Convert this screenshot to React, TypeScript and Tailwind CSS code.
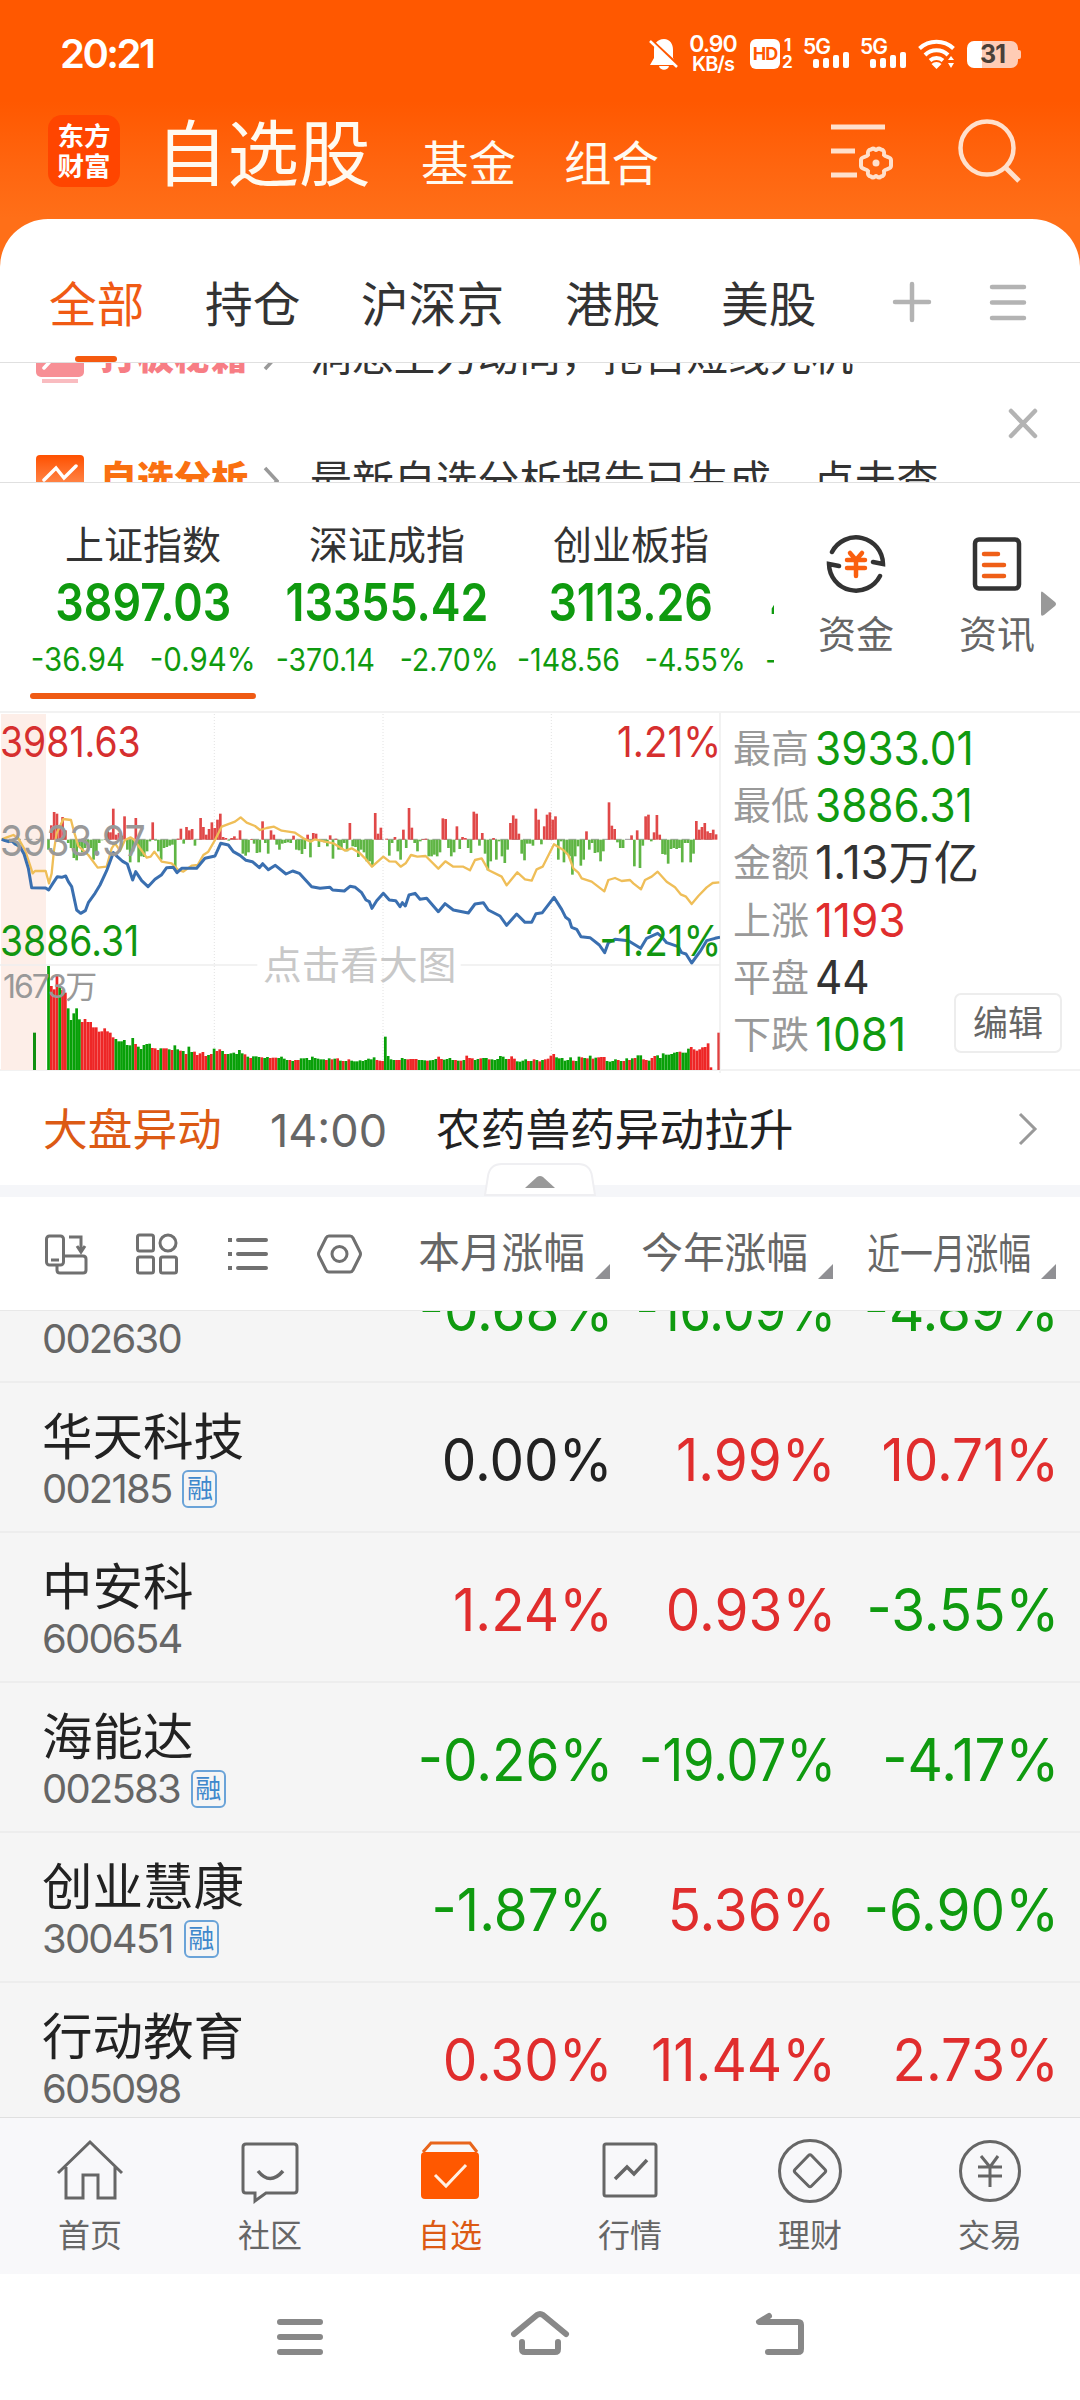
import type { ReactNode } from "react";

const UP = "text-[#e02d2d]";
const DOWN = "text-[#0f9a0f]";
const FLAT = "text-[#222222]";

function tone(value: string) {
  if (value.startsWith("-")) return DOWN;
  return value === "0.00%" ? FLAT : UP;
}

// One entry per minute, in thirds of a pixel: above zero is drawn red, below zero green.
const MOMENTUM = [
  -30, 43, 83, 78, 40, 68, 28, -10, -25, -55, -62, -20, -38, -25, -12, -25, -60, -38, -10, -2, 0, 25, 22, 93, 15, 20, 12,
  70, -30, -68, -35, 65, -68, -50, -52, -35, -5, 52, -3, -35, -60, -25, -22, -18, -15, -90, 3, 33, -12, 38, 28, 32, -18,
  0, 65, 38, 15, 32, 52, 35, 60, 78, 8, 5, -3, 5, 10, 3, 28, -42, -48, -38, 2, -12, -40, -38, 55, -10, -42, 28, 15, -15,
  -30, -12, -10, -8, -10, 12, -30, -32, -43, -28, 15, -53, 20, 18, -22, -5, -8, -20, 13, -57, 3, -30, -30, -10, -35, 50,
  -20, -22, -52, -30, -38, -65, -65, -80, 80, 18, 36, 0, 3, -48, -10, 8, -35, -60, 30, -25, 95, 36, -10, -35, -5, 2, 3,
  -50, -50, -45, -50, -38, 64, 62, -25, -50, -38, 40, -28, 8, 5, -25, -40, 84, 78, -18, 20, -42, -92, -65, 5, -60, -5,
  -50, -70, -30, 50, 73, 63, 18, -42, -62, -12, -12, -18, 93, 60, -14, 40, 75, 82, 60, 70, -60, -5, -68, -40, -50, -105,
  -50, -20, -78, -60, 25, -30, -10, -40, -38, -65, -35, 0, 112, 42, 32, -8, -25, -25, 0, 0, 13, -80, 28, -85, -18, 70,
  75, -5, 22, 74, 15, -43, -45, -72, -28, -25, -28, -25, -68, -10, -10, -68, -42, 56, 30, 38, 50, 25, 20, 30, 16,
];

// Same scale; r / g is the bar's colour.
const VOLUME = `g312 r252 r242 r285 g248 r240 r232 g185 g150 g170 g185 g152 r144 r153 r144 r144 r128 r128 r115 r116 r125
r116 r112 r98 g93 g86 g86 g90 g75 g74 g96 r78 g70 g63 g75 g78 g79 r66 r65 r60 g65 r65 r65 g62 r60 g74 g62 r58 g57 r48
g70 g54 r55 r45 r50 r54 r42 g45 r48 g64 r57 r62 g57 r48 g48 g50 g52 g48 g60 g50 r47 g40 r36 g41 g41 g39 r38 g36 g39
r36 r37 r37 g36 g40 g34 g30 r30 g27 r30 r30 g35 g35 g36 g30 g40 g36 g34 g32 g32 r30 g35 r32 g34 r35 g28 r27 g27 r32
g28 g26 g26 g29 g27 g30 g34 g32 g38 r30 r28 r27 g100 g42 g32 g30 r30 r30 g36 g33 r32 r33 r33 r33 g30 g30
g29 r28 g29 g30 g33 r40 r33 g31 g33 g36 g30 r30 g28 r28 g30 r43 r36 r35 g30 g33 r35 g36 g36 r32 g32
g30 g33 g42 g40 g33 r33 r41 r34 g26 g25 g28 g32 r27 g27 r32 g30 r26 g30 r32 r34 r43 r48 g38 g35 g36 g28 g30 g38
r28 g27 g40 r38 g36 r35 g43 r34 g37 r38 r39 r39 g27 g25 g27 g32 r30 g27 r27 g35 r30 g35 r36 g44 g44
r32 r30 g28 r36 r42 g44 g36 g50 g46 g46 g48 g52 g54 r55 g52 g52 g64 r69 r62 r58 r62 r68 r69 r80 r8`
  .split(/\s+/)
  .map((bar) => ({ up: bar[0] === "r", height: Number(bar.slice(1)) }));

const PRICE_LINE =
  "5,418 15,422 25,425 35,422 45,432 60,440 72,462 85,505 95,563 137,564 146,570 160,548 172,530 185,532 197,528 205,545 215,560 230,630 242,640 256,632 265,608 285,580 300,555 320,512 340,458 352,470 368,484 382,492 398,540 407,515 425,542 444,560 465,538 485,524 500,503 520,502 531,518 545,505 590,505 615,475 645,468 662,430 685,435 700,455 720,466 738,481 757,485 778,503 788,491 805,509 826,496 858,522 878,513 898,520 935,560 960,565 990,562 998,570 1033,573 1050,559 1066,562 1085,578 1098,600 1108,605 1116,625 1130,602 1150,580 1168,600 1187,602 1200,620 1207,608 1216,618 1227,585 1245,580 1260,598 1280,595 1315,635 1335,611 1360,630 1405,639 1425,612 1450,608 1465,630 1500,648 1520,676 1550,642 1575,667 1595,667 1608,641 1627,638 1662,592 1685,628 1697,652 1708,660 1715,682 1730,688 1743,710 1770,713 1798,735 1814,758 1825,728 1845,718 1885,722 1922,745 1940,715 1973,700 1985,710 2000,728 2035,740 2045,758 2058,762 2075,789 2100,755 2120,722 2145,715 2160,712";

const AVERAGE_LINE =
  "5,418 20,412 40,405 55,415 75,450 90,495 98,520 105,513 137,513 147,550 155,520 162,450 170,400 190,357 213,360 222,395 235,438 265,465 293,503 320,500 335,445 345,430 360,452 375,420 392,412 403,420 440,473 452,470 463,455 485,485 515,490 535,510 550,515 575,497 593,495 610,465 625,455 645,420 665,380 705,365 722,352 740,368 765,378 780,390 800,384 822,380 845,392 885,398 910,415 932,425 945,418 975,425 1000,430 1036,452 1055,445 1080,460 1095,475 1116,500 1150,470 1168,484 1187,485 1202,500 1217,490 1233,465 1252,470 1277,468 1315,506 1336,484 1360,500 1390,500 1410,511 1425,480 1445,475 1465,510 1505,530 1520,556 1552,517 1575,538 1595,542 1610,508 1628,500 1662,433 1690,450 1705,465 1720,505 1735,518 1745,535 1775,545 1813,574 1825,540 1845,534 1865,543 1890,540 1900,550 1923,568 1935,540 1955,530 1973,515 2000,545 2025,562 2042,583 2058,590 2075,612 2095,588 2120,562 2138,549 2158,547";

function Signal() {
  return (
    <div className="flex h-[30px] w-[46px] flex-col">
      <span className="text-[21px] leading-[15px] font-semibold tracking-[-1px]">5G</span>
      <div className="-mt-[2px] flex items-end gap-[4px] pl-[10px]">
        <i className="h-[9px] w-[6px] rounded-[2px] bg-white" />
        <i className="h-[10px] w-[6px] rounded-[2px] bg-white" />
        <i className="h-[13px] w-[6px] rounded-[2px] bg-white" />
        <i className="h-[16px] w-[6px] rounded-[2px] bg-white" />
      </div>
    </div>
  );
}

function StatusBar() {
  return (
    <div className="flex h-[108px] items-center pl-[60px] text-white">
      <span className="w-[589px] text-[40px] font-semibold tracking-[-2.500px]">20:21</span>
      <svg width="30" height="32" viewBox="0 0 30 32">
        <path d="M15 1c-7 0-10 5-10 11v8l-4 7h27l-4-7v-8c0-6-3-11-9-11zM10 28h10c-1 5-9 5-10 0z" fill="#fff" />
        <path d="M1 1l30 28" stroke="#ff5800" strokeWidth="3" />
        <path d="M1 3l27 26" stroke="#fff" strokeWidth="2.500" />
      </svg>
      <div className="ml-[10px] flex w-[48px] flex-col items-center">
        <span className="text-[23px] leading-[19px] font-semibold tracking-[-1px]">0.90</span>
        <span className="text-[20px] leading-[20px] font-semibold tracking-[-1px]">KB/s</span>
      </div>
      <div className="ml-[13px] flex h-[30px] w-[30px] items-center justify-center rounded-[6px] bg-white text-[18px] font-bold tracking-[-1px] text-[#ff5800]">
        HD
      </div>
      <div className="ml-[2px] flex w-[21px] flex-col text-[17px] leading-[17px] font-bold">
        <span className="pl-[2px]">1</span>
        <span>2</span>
      </div>
      <Signal />
      <span className="w-[11px]" />
      <Signal />
      <svg className="ml-[12px]" width="38" height="32" viewBox="0 0 38 32" fill="none" stroke="#fff" strokeWidth="4">
        <path d="M1.500 10.500a25 25 0 0 1 34 0M7 17a16.500 16.500 0 0 1 23 0M12 22.500a10 10 0 0 1 13 0" />
        <path d="M13.500 26a7 7 0 0 1 10 0l-5 5z" fill="#fff" stroke="none" />
        <path d="M30 22l3-4 3 4zM30 25h6l-3 5z" fill="#fff" stroke="none" />
      </svg>
      <div className="ml-[11px] flex h-[27px] w-[51px] items-center justify-center rounded-[7px] bg-linear-to-r from-white from-30% to-[#ffccb5] to-30% text-[25px] font-bold tracking-[-1px] text-[#4a4038]">
        31
      </div>
      <i className="h-[9px] w-[3px] rounded-r-[2px] bg-[#ffccb5]" />
    </div>
  );
}

function Header() {
  return (
    <div className="flex h-[111px] text-[#fffaf0]">
      <div className="mt-[7px] ml-[48px] flex size-[72px] flex-col items-center justify-center gap-[3px] rounded-[14px] bg-[#ff4500] text-[26.500px] font-bold text-white">
        <span>东方</span>
        <span>财富</span>
      </div>
      <span className="mt-[11px] ml-[36px] w-[265px] text-[71.500px]">自选股</span>
      <span className="mt-[32px] w-[143px] text-[47.500px]">基金</span>
      <span className="mt-[32px] w-[266px] text-[47.500px]">组合</span>
      <svg
        className="mt-[12px]"
        width="64"
        height="64"
        viewBox="0 0 64 64"
        fill="none"
        stroke="#ffe0cc"
        strokeWidth="5"
      >
        <path d="M1 7h54M1 31h24M1 55h26" />
        <path
          d="M41 29.500c2.500-2.500 4 .5 5 .5s2.500-3 5-.5c3 .5 3.500 2 3 5.500 1.500 2.500 7 1.500 7 5v6c0 3.500-5.500 2.500-7 5 .5 3.500 0 5-3 5.500-2.500 2.500-4-.5-5-.5s-2.500 3-5 .5c-3-.5-3.500-2-3-5.500-1.500-2.500-7-1.500-7-5v-6c0-3.500 5.500-2.500 7-5-.5-3.500 0-5 3-5.500z"
          strokeWidth="4"
        />
        <circle cx="46" cy="43" r="3.500" fill="#ffe0cc" stroke="none" />
      </svg>
      <svg className="mt-[10px] ml-[63px]" width="66" height="66" viewBox="0 0 66 66" fill="none" stroke="#ffe0cc">
        <circle cx="30" cy="30" r="26.500" strokeWidth="4.500" />
        <path d="M48 49l14 14" strokeWidth="5" />
      </svg>
    </div>
  );
}

function GroupTabs() {
  return (
    <div className="relative flex h-[144px] border-b border-[#e0e0e0] pt-[63px] text-[47.700px] text-[#333333]">
      <span className="ml-[49px] w-[156px] text-[#f05a14]">全部</span>
      <span className="w-[156px]">持仓</span>
      <span className="w-[204px]">沪深京</span>
      <span className="w-[156px]">港股</span>
      <span className="w-[170px]">美股</span>
      <svg
        className="-mt-[2px]"
        width="140"
        height="44"
        viewBox="0 0 140 44"
        fill="none"
        stroke="#b3b3b3"
        strokeWidth="4.500"
        strokeLinecap="round"
      >
        <path d="M4 22h34M21 4v36M101 7h32M101 22.500h32M101 38h32" />
      </svg>
      <i className="absolute top-[137px] left-[75px] h-[6px] w-[42px] rounded-full bg-[#f55a10]" />
    </div>
  );
}

function Chevron() {
  return (
    <svg width="16" height="30" viewBox="0 0 16 30" fill="none" stroke="#999" strokeWidth="3.500">
      <path d="M2 2l12 13-12 13" />
    </svg>
  );
}

function Ticker() {
  return (
    <div className="relative h-[120px] overflow-hidden border-b border-[#e0e0e0]">
      <div className="-mt-[33px] flex h-[55px] items-center pl-[36px]">
        <svg width="48" height="50" viewBox="0 0 48 50">
          <rect width="48" height="44" rx="5" fill="#f78f95" />
          <path d="M8 35l13-14 8 7" fill="none" stroke="#fff" strokeWidth="3.500" strokeLinecap="round" />
          <path d="M6 48h36" stroke="#f9bcc0" strokeWidth="4" />
        </svg>
        <span className="-mt-[2px] ml-[16px] w-[163px] text-[37px] font-black text-[#f77d84]">打板秘籍</span>
        <span className="-mt-[4px] w-[47px]">
          <Chevron />
        </span>
        <span className="-mt-[2px] text-[41.800px] text-[#333333]">洞悉主力动向，抢占短线先机</span>
      </div>
      <div className="mt-[64px] flex h-[60px] items-center pl-[36px]">
        <svg width="48" height="48" viewBox="0 0 48 48">
          <defs>
            <linearGradient id="analysis" x1="0" y1="0" x2="0" y2="1">
              <stop offset="0" stopColor="#ff5000" />
              <stop offset="1" stopColor="#ffa878" />
            </linearGradient>
          </defs>
          <rect width="48" height="48" rx="4" fill="url(#analysis)" />
          <path d="M8 25l12-12 8 10 12-12" fill="none" stroke="#fff" strokeWidth="3.500" strokeLinecap="round" />
        </svg>
        <span className="ml-[16px] w-[163px] text-[37px] font-black text-[#fa7010]">自选分析</span>
        <span className="mt-[4px] w-[47px]">
          <Chevron />
        </span>
        <span className="mt-[4px] text-[41.900px] whitespace-nowrap text-[#333333]">最新自选分析报告已生成，点击查</span>
      </div>
      <svg className="absolute top-[44px] left-[1007px]" width="32" height="32" viewBox="0 0 32 32">
        <path d="M4 4l24 25M28 4L4 29" stroke="#b3b3b3" strokeWidth="4.500" strokeLinecap="round" />
      </svg>
    </div>
  );
}

const indices = [
  { name: "上证指数", value: "3897.03", change: "-36.94", percent: "-0.94%", active: true },
  { name: "深证成指", value: "13355.42", change: "-370.14", percent: "-2.70%" },
  { name: "创业板指", value: "3113.26", change: "-148.56", percent: "-4.55%" },
];

function IndexStrip() {
  return (
    <div className="flex h-[228px]">
      <div className="flex w-[774px] overflow-hidden pl-[21px]">
        {indices.map((item) => (
          <div key={item.name} className="flex w-[244px] shrink-0 flex-col items-center pt-[42px]">
            <span className="text-[39px] text-[#333333]">{item.name}</span>
            <span className={`mt-[13px] scale-x-[0.86] text-[52px] font-semibold ${DOWN}`}>{item.value}</span>
            <div
              className={`mt-[15px] flex w-max scale-x-[0.92] gap-[27px] whitespace-nowrap ${DOWN} ${
                item.active ? "text-[32px]" : "text-[31px]"
              }`}
            >
              <span>{item.change}</span>
              <span>{item.percent}</span>
            </div>
            {item.active && <i className="mt-[17px] h-[6px] w-[226px] rounded-full bg-[#ef5a14]" />}
          </div>
        ))}
        <div className={`flex w-[244px] shrink-0 flex-col pt-[94px] ${DOWN}`}>
          <span className="pl-[16px] text-[52px] font-semibold">4</span>
          <span className="mt-[15px] pl-[12px] text-[31px]">-</span>
        </div>
      </div>
      <div className="flex w-[164px] flex-col items-center pt-[51px]">
        <svg width="60" height="60" viewBox="0 0 60 60" fill="none" stroke="#333" strokeWidth="4.500" strokeLinecap="round">
          <path d="M6 18a27 27 0 0 1 51 12l-10-2M54 42A27 27 0 0 1 3 30l10 2" />
          <path d="M24 19l6 7 6-7M21 26h18M21 34h18M30 26v16" stroke="#fa5f0f" />
        </svg>
        <span className="mt-[21px] text-[38px] text-[#666666]">资金</span>
      </div>
      <div className="flex w-[103px] flex-col items-end pt-[54px]">
        <svg className="mr-[19px]" width="50" height="54" viewBox="0 0 50 54" fill="none" strokeLinecap="round">
          <rect x="3" y="2.500" width="44" height="49" rx="4" stroke="#333" strokeWidth="4.500" />
          <path d="M12 17h14M12 28h20M12 39h20" stroke="#ef5f17" strokeWidth="4.500" />
        </svg>
        <span className="mt-[24px] mr-[6px] text-[38px] whitespace-nowrap text-[#666666]">资讯</span>
      </div>
      <svg className="mt-[108px]" width="16" height="25" viewBox="0 0 16 25">
        <path d="M0 2q0-3 3 0l11 9q2 2 0 4L3 24q-3 2-3-1z" fill="#999" />
      </svg>
    </div>
  );
}

function IntradayChart() {
  return (
    <div className="relative h-[360px] w-[721px] border-r-2 border-[#f2f2f2]">
      <svg width="720" height="357" viewBox="0 39 2160 1071">
        <rect x="3" y="42" width="135" height="1068" fill="#fdeee8" />
        <path d="M643 42V1110M1149 42V1110M1654 42V1110" stroke="#e2e2e2" strokeWidth="3" strokeDasharray="3 6" />
        <path d="M0 795H772M1382 795H2160" stroke="#eeeeee" strokeWidth="5" />
        <path d="M5 418H2140" stroke="#999" strokeWidth="3" strokeDasharray="24 10" />
        {MOMENTUM.map((height, i) => (
          <rect
            key={i}
            x={141.5 + i * 8.45}
            y={height > 0 ? 419 - height : 419}
            width="8"
            height={Math.abs(height)}
            fill={height > 0 ? "#e04848" : "#5fb544"}
          />
        ))}
        <rect x="99" y="998" width="9" height="112" fill="#109010" />
        {VOLUME.map((bar, i) => (
          <rect
            key={i}
            x={141.5 + i * 8.42}
            y={1110 - bar.height}
            width="8.200"
            height={bar.height}
            fill={bar.up ? "#ee2626" : "#08a008"}
          />
        ))}
        <rect x="2152" y="998" width="7" height="112" fill="#e04040" />
        <polyline points={AVERAGE_LINE} fill="none" stroke="#efbe58" strokeWidth="7" strokeLinejoin="round" />
        <polyline points={PRICE_LINE} fill="none" stroke="#3a6fb0" strokeWidth="9" strokeLinejoin="round" />
      </svg>
      <span className="absolute top-[8px] left-0 origin-left scale-x-[0.89] text-[42px] text-[#d62f2f]">3981.63</span>
      <span className="absolute top-[107px] left-0 origin-left scale-x-[0.89] text-[42px] text-[#999999]">3933.97</span>
      <span className="absolute top-[207px] left-0 origin-left scale-x-[0.89] text-[42px] text-[#119611]">3886.31</span>
      <span className="absolute top-[8px] -right-[2px] origin-right scale-x-[0.92] text-[42px] text-[#d62f2f]">1.21%</span>
      <span className="absolute top-[207px] -right-[2px] origin-right scale-x-[0.92] text-[42px] text-[#119611]">-1.21%</span>
      <span className="absolute top-[258px] left-[3px] text-[32px] tracking-[-2px] text-[#999999]">1673万</span>
      <span className="absolute top-[233px] left-[263px] text-[38.700px] text-[#c8c8c8]">点击看大图</span>
    </div>
  );
}

const stats = [
  { label: "最高", value: "3933.01", style: `scale-x-[0.92] ${DOWN}` },
  { label: "最低", value: "3886.31", style: `scale-x-[0.92] ${DOWN}` },
  { label: "金额", value: "1.13万亿", style: "scale-x-[0.98] text-[#333333]" },
  { label: "上涨", value: "1193", style: `scale-x-[0.96] ${UP}` },
  { label: "平盘", value: "44", style: "scale-x-[0.92] text-[#333333]" },
  { label: "下跌", value: "1081", style: `scale-x-[0.96] ${DOWN}` },
];

function MarketPanel() {
  return (
    <div className="flex h-[360px] border-y-2 border-[#f2f2f2]">
      <IntradayChart />
      <div className="relative flex-1 pt-[6px] pl-[12px]">
        {stats.map((row) => (
          <div key={row.label} className="flex h-[57.300px] items-center">
            <span className="w-[82px] text-[38px] text-[#999999]">{row.label}</span>
            <span className={`origin-left text-[46px] ${row.style}`}>{row.value}</span>
          </div>
        ))}
        <button className="absolute top-[280px] right-[18px] h-[60px] w-[108px] rounded-[7px] border-2 border-[#ededed] bg-white text-[35px] leading-none text-[#666666]">
          编辑
        </button>
      </div>
    </div>
  );
}

function Announcement() {
  return (
    <div className="relative flex h-[126px] border-b-12 border-[#f5f6f9] pt-[37px] text-[44.700px]">
      <span className="ml-[43px] w-[227px] text-[#dc5a14]">大盘异动</span>
      <span className="w-[166px] text-[45px] text-[#666666]">14:00</span>
      <span className="w-[582px] text-[#222222]">农药兽药异动拉升</span>
      <svg className="mt-[4px]" width="20" height="34" viewBox="0 0 20 34">
        <path d="M2 2l15 15L2 32" fill="none" stroke="#999" strokeWidth="3" />
      </svg>
      <svg className="absolute top-[92px] left-[484px]" width="112" height="33" viewBox="0 0 112 33">
        <path d="M1 32l3-19Q6 1 18 1h76q12 0 14 12l3 19z" fill="#fff" stroke="#efeff2" strokeWidth="2" />
        <path d="M41 25l12-11q3-2 6 0l12 11z" fill="#999" />
      </svg>
    </div>
  );
}

function SortColumn({ children, squeeze }: { children: ReactNode; squeeze?: boolean }) {
  return (
    <div className="flex w-[223px] justify-end gap-[10px] pt-[36px]">
      <span className={squeeze ? "origin-right scale-x-[0.78] text-[42px] whitespace-nowrap" : "text-[41.700px]"}>{children}</span>
      <svg className="mt-[31px] shrink-0" width="15" height="15" viewBox="0 0 15 15">
        <path d="M15 0v15H0z" fill="#909094" />
      </svg>
    </div>
  );
}

function ListHeader() {
  return (
    <div className="flex h-[114px] border-b border-[#e8e8e8] text-[#666666]">
      <svg className="mt-[34px] ml-[43px]" width="344" height="46" viewBox="0 0 344 46" fill="none" stroke="#707070" strokeWidth="3">
        <rect x="3.500" y="5" width="17" height="29" rx="3" />
        <path d="M8 29h8M26 6h12v14M34 15l4 6 4-6M21 25h19q3 0 3 3v11q0 3-3 3H17q-3 0-3-3v-5" />
        <rect x="94.500" y="4" width="16" height="16" rx="2" />
        <circle cx="125" cy="12" r="8" />
        <rect x="94.500" y="26" width="16" height="16" rx="2" />
        <rect x="117.500" y="26" width="16" height="16" rx="2" />
        <path d="M195 9h28M195 23h28M195 37h28" strokeWidth="4" strokeLinecap="round" />
        <path d="M185 9h4M185 23h4M185 37h4" strokeWidth="4" />
        <path d="M286 5h21q2 0 3 2l7 14q1 2 0 4l-7 14q-1 2-3 2h-21q-2 0-3-2l-7-14q-1-2 0-4l7-14q1-2 3-2z" />
        <circle cx="296.500" cy="23" r="7.500" />
      </svg>
      <SortColumn>本月涨幅</SortColumn>
      <SortColumn>今年涨幅</SortColumn>
      <SortColumn squeeze>近一月涨幅</SortColumn>
    </div>
  );
}

const stocks = [
  { name: "华西能源", code: "002630", margin: false, values: ["-0.68%", "-16.09%", "-4.89%"] },
  { name: "华天科技", code: "002185", margin: true, values: ["0.00%", "1.99%", "10.71%"] },
  { name: "中安科", code: "600654", margin: false, values: ["1.24%", "0.93%", "-3.55%"] },
  { name: "海能达", code: "002583", margin: true, values: ["-0.26%", "-19.07%", "-4.17%"] },
  { name: "创业慧康", code: "300451", margin: true, values: ["-1.87%", "5.36%", "-6.90%"] },
  { name: "行动教育", code: "605098", margin: false, values: ["0.30%", "11.44%", "2.73%"] },
];

function StockList() {
  return (
    <div className="h-[806px] overflow-hidden bg-[#f5f5f5]">
      <div className="-mt-[78px]">
        {stocks.map((stock) => (
          <div key={stock.code} className="flex h-[150px] border-b-2 border-[#ededed] pl-[42px]">
            <div className="w-[348px] pt-[29px]">
              <div className="text-[50.500px]">
                <span className="text-[#222222]">{stock.name}</span>
              </div>
              <div className="mt-[5px] flex h-[42px] items-center gap-[11px]">
                <span className="text-[40px] tracking-[-1.800px] text-[#666666]">{stock.code}</span>
                {stock.margin && (
                  <span className="flex h-[38px] w-[35px] items-center justify-center rounded-[6px] border-2 border-[#6aa3d8] text-[26px] text-[#3f88cc]">
                    融
                  </span>
                )}
              </div>
            </div>
            {stock.values.map((value) => (
              <div key={value} className={`flex w-[223px] justify-end pt-[47px] text-[59px] ${tone(value)}`}>
                {/* seven characters only fit the column when set narrower */}
                <span className={`origin-right ${value.length > 6 ? "scale-x-[0.86]" : "scale-x-[0.93]"}`}>{value}</span>
              </div>
            ))}
          </div>
        ))}
      </div>
    </div>
  );
}

const tabs = [
  {
    label: "首页",
    icon: <path d="M2 36L34 5l32 31M10 30v31h17V38h15v23h17V30" />,
  },
  {
    label: "社区",
    icon: (
      <>
        <path d="M10 7h48q3 0 3 3v43q0 3-3 3H30l-11 8v-8h-9q-3 0-3-3V10q0-3 3-3z" />
        <path d="M22 34q12 15 25 0" strokeWidth="3.500" />
      </>
    ),
  },
  {
    label: "自选",
    active: true,
    icon: (
      <>
        <path d="M7 15l8-9h39l7 9" stroke="#e8651c" />
        <rect x="5" y="15" width="58" height="47" rx="4" fill="#ff5800" stroke="none" />
        <path d="M19 38l11 11 20-21" stroke="#fff0e4" />
      </>
    ),
  },
  {
    label: "行情",
    icon: (
      <>
        <rect x="8" y="7" width="52" height="52" rx="2" />
        <path d="M19 42l12-12 7 7 13-14" strokeWidth="3.500" />
      </>
    ),
  },
  {
    label: "理财",
    icon: (
      <>
        <circle cx="34" cy="34" r="30.500" />
        <path d="M32.500 18.500q1.500-1.500 3 0L49 32.500q1.500 1.500 0 3L35.500 49q-1.500 1.500-3 0L19 35.500q-1.500-1.500 0-3z" />
      </>
    ),
  },
  {
    label: "交易",
    icon: (
      <>
        <circle cx="34" cy="34" r="29.500" />
        <path d="M25 19l9 11 8-11M22 30h24M22 39h24M34 30v20" />
      </>
    ),
  },
];

function TabBar() {
  return (
    <div className="flex h-[157px] border-t border-[#e0e0e0] bg-[#f8f8fa]">
      {tabs.map((tab) => (
        <div
          key={tab.label}
          className={`flex w-[180px] flex-col items-center pt-[19px] ${tab.active ? "text-[#dc5a14]" : "text-[#666666]"}`}
        >
          <svg width="68" height="68" viewBox="0 0 68 68" fill="none" stroke="currentColor" strokeWidth="3">
            {tab.icon}
          </svg>
          <span className="mt-[15px] text-[32px]">{tab.label}</span>
        </div>
      ))}
    </div>
  );
}

function SystemNav() {
  return (
    <div className="flex h-[126px] items-center justify-center gap-[180px] bg-white">
      {[
        "M10 15h40M10 30h40M10 45h40",
        "M4 27L27 8q3-2 6 0l23 19M12 35v7q0 3 3 3h30q3 0 3-3v-7",
        "M19 9l-10 6h39q3 0 3 3v24q0 3-3 3H18",
      ].map((d) => (
        <svg
          key={d}
          width="60"
          height="60"
          viewBox="0 0 60 60"
          fill="none"
          stroke="#888"
          strokeWidth="6"
          strokeLinecap="round"
          strokeLinejoin="round"
        >
          <path d={d} />
        </svg>
      ))}
    </div>
  );
}

export default function App() {
  return (
    <div className="h-[2400px] w-[1080px] overflow-hidden bg-white font-['Inter','Noto_Sans_CJK_SC',sans-serif] leading-none">
      <div className="h-[267px] bg-linear-to-b from-[#ff5800] from-38% to-[#ff6f18] to-82%">
        <StatusBar />
        <Header />
      </div>
      <div className="-mt-[48px] rounded-t-[48px] bg-white">
        <GroupTabs />
        <Ticker />
        <IndexStrip />
        <MarketPanel />
        <Announcement />
        <ListHeader />
        <StockList />
        <TabBar />
        <SystemNav />
      </div>
    </div>
  );
}
